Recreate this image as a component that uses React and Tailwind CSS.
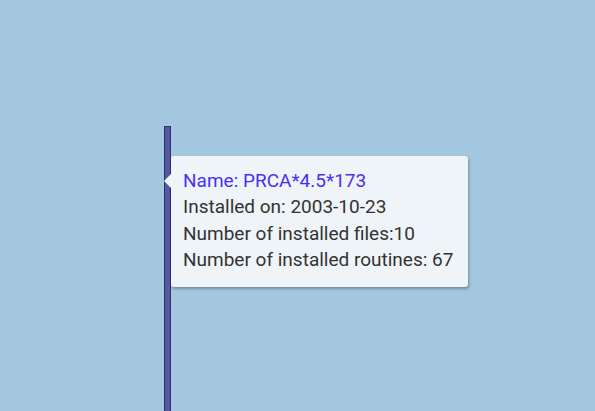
import React from 'react';

const lines = [
    'Installed on: 2003-10-23',
    'Number of installed files:10',
    'Number of installed routines: 67',
];

export default function App() {
    return (
        <div className="relative w-[595px] h-[411px] overflow-hidden bg-[#a3c7df]" style={{ fontFamily: 'Roboto, "Liberation Sans", sans-serif' }}>
            {/* bar of the chart */}
            <div className="absolute left-[164px] top-[126px] w-[7px] h-[290px] bg-[#5558a3] border border-[#2e3066]"></div>

            {/* tooltip */}
            <div className="absolute left-[171px] top-[156px] w-[297px] h-[131px] bg-[#eef4f8] rounded-[3px] shadow-[1px_2px_3px_rgba(0,0,0,0.3)] pl-[12px] pt-[12px] text-[19px] leading-[26.3px] text-[#333333]">
                <div className="absolute left-[-7px] top-[18px] w-0 h-0 border-y-[7px] border-y-transparent border-r-[7px] border-r-[#eef4f8]"></div>
                <div className="text-[#4b2ff0]">Name: PRCA*4.5*173</div>
                {lines.map((l) => (
                    <div key={l} className="whitespace-nowrap">{l}</div>
                ))}
            </div>
        </div>
    );
}
